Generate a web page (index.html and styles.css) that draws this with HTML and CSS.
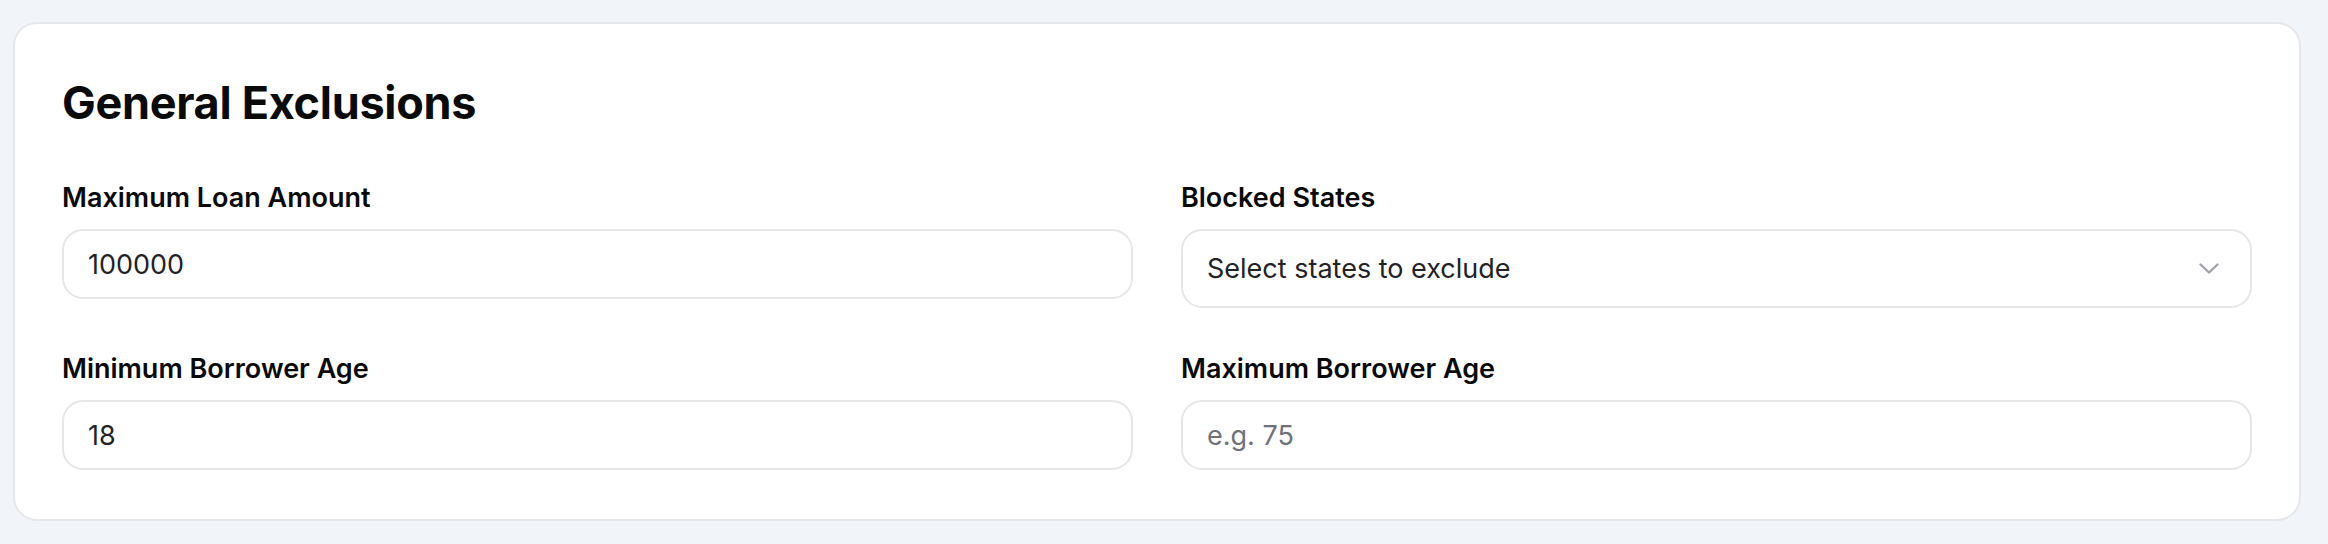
FILE: index.html
```html
<!DOCTYPE html>
<html lang="en">
<head>
    <meta charset="UTF-8">
    <meta name="viewport" content="width=device-width, initial-scale=1.0">
    <title>General Exclusions</title>
    <link rel="stylesheet" href="styles.css">
</head>
<body>
    <div class="card">
        <h2 class="card-title">General Exclusions</h2>
        <div class="fields">
            <div class="field">
                <label class="field-label" for="max-loan">Maximum Loan Amount</label>
                <input class="field-input" id="max-loan" type="text" value="100000">
            </div>
            <div class="field">
                <label class="field-label">Blocked States</label>
                <button class="field-select" type="button">
                    <span>Select states to exclude</span>
                    <svg class="chevron" width="20" height="11" viewBox="0 0 20 11">
                        <path d="M1.5 1.5 L10 9.5 L18.5 1.5" fill="none" stroke="#a1a1aa" stroke-width="2.4" stroke-linecap="round" stroke-linejoin="round"/>
                    </svg>
                </button>
            </div>
            <div class="field">
                <label class="field-label" for="min-age">Minimum Borrower Age</label>
                <input class="field-input" id="min-age" type="text" value="18">
            </div>
            <div class="field">
                <label class="field-label" for="max-age">Maximum Borrower Age</label>
                <input class="field-input" id="max-age" type="text" placeholder="e.g. 75">
            </div>
        </div>
    </div>
</body>
</html>
```

FILE: styles.css
```css
html, body {
    margin: 0;
    background: #f1f4f9;
}
body {
    padding: 22px 27px 22px 13px;
    font-family: Inter, "Liberation Sans", sans-serif;
    color: #0a0a0a;
}
.card {
    background: #fff;
    border: 2px solid #e6e7ea;
    border-radius: 24px;
    padding: 47px 47px 49px;
}
.card-title {
    margin: 0 0 42px;
    font-size: 45px;
    line-height: 64px;
    font-weight: 700;
    letter-spacing: -0.3px;
    color: #0a0a0a;
}
.fields {
    display: grid;
    grid-template-columns: 1fr 1fr;
    column-gap: 48px;
    row-gap: 40px;
    align-items: start;
}
.field {
    display: flex;
    flex-direction: column;
}
.field-label {
    font-size: 27px;
    line-height: 42px;
    font-weight: 600;
    letter-spacing: 0;
    margin-bottom: 10px;
    color: #0a0a0a;
}
.field-input,
.field-select {
    box-sizing: border-box;
    width: 100%;
    height: 70px;
    padding: 0 24px;
    border: 2px solid #e6e6e9;
    border-radius: 21px;
    background: #fff;
    font-family: inherit;
    font-size: 27px;
    color: #232327;
    outline: none;
}
.field-input::placeholder {
    color: #71717a;
}
.field-select {
    height: 79px;
    display: flex;
    align-items: center;
    justify-content: space-between;
    padding-right: 31px;
    text-align: left;
    cursor: pointer;
}
.chevron {
    flex: none;
}
```
